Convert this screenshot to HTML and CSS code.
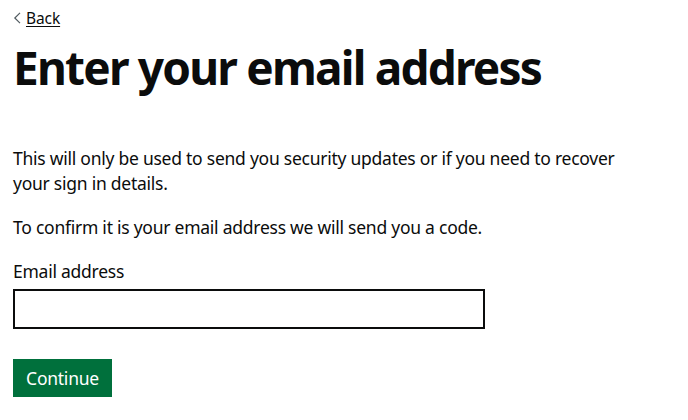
FILE: index.html
```html
<!DOCTYPE html>
<html lang="en">
<head>
<meta charset="utf-8">
<title>Enter your email address</title>
<link rel="stylesheet" href="styles.css">
</head>
<body>
<div class="page">
  <a class="back" href="#"><svg class="chev" width="8" height="12" viewBox="0 0 8 12"><path d="M7 0.8 L1.8 6 L7 11.2" fill="none" stroke="#505a5f" stroke-width="1.2"/></svg><span>Back</span></a>
  <h1 class="title">Enter your email address</h1>
  <p class="body">This will only be used to send you security updates or if you need to recover your sign in details.</p>
  <p class="body">To confirm it is your email address we will send you a code.</p>
  <label class="label" for="email">Email address</label>
  <input class="input" id="email" type="email">
  <button class="button" type="button">Continue</button>
</div>
</body>
</html>
```
FILE: styles.css
```css
* { box-sizing: border-box; }
html, body { margin: 0; padding: 0; background: #fff; }
body { font-family: "Noto Sans", "Liberation Sans", sans-serif; color: #0b0c0c; }
.page { padding: 8px 13px 0; display: flex; flex-direction: column; align-items: flex-start; }
.back { display: flex; align-items: center; gap: 5px; color: #0b0c0c; font-size: 15.5px; line-height: 20px; text-decoration: underline; text-underline-offset: 2px; letter-spacing: -0.1px; }
.chev { display: block; }
.title { font-size: 46px; font-weight: 700; line-height: 50px; margin: 14px 0 54px; letter-spacing: -1.8px; }
.body { font-size: 17.5px; line-height: 25px; margin: 0 0 19px; width: 640px; letter-spacing: -0.25px; }
.label { font-size: 17.5px; line-height: 25px; margin-top: 0; margin-bottom: 5px; letter-spacing: -0.25px; }
.input { width: 472px; height: 40px; border: 2px solid #0b0c0c; border-radius: 0; margin: 0 0 30px; font-size: 19px; }
.button { background: #00703c; color: #fff; border: 0; border-radius: 0; box-shadow: 0 2px 0 #002d18; font-family: inherit; font-size: 17.5px; line-height: 25px; padding: 7px 11px 6px; width: 99px; height: 38px; letter-spacing: -0.25px; }
```
